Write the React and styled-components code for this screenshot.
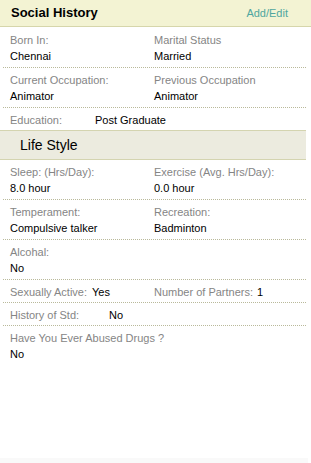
import React from "react";
import styled, { createGlobalStyle } from "styled-components";

const Global = createGlobalStyle`
  html, body { margin: 0; padding: 0; background: #fff; }
  body { font-family: "Liberation Sans", Arial, sans-serif; }
`;

const Page = styled.div`
  width: 311px;
  min-height: 463px;
  display: flex;
  flex-direction: column;
  background: #fff;
`;

const Header = styled.div`
  height: 25px;
  display: flex;
  align-items: center;
  justify-content: space-between;
  padding: 0 23px 1px 11px;
  background: #f3f3d3;
  border-bottom: 1px solid #d6d6ab;
`;

const Title = styled.div`
  font-size: 13px;
  font-weight: bold;
  color: #000;
`;

const EditLink = styled.a`
  font-size: 11px;
  color: #4fa69f;
  text-decoration: none;
  cursor: pointer;
`;

const Content = styled.div`
  width: 306px;
  padding-top: 1px;
`;

const Row = styled.div`
  margin-left: 3px;
  padding: 4px 0 ${(p) => (p.$single ? "2px" : "3px")} 7px;
  display: grid;
  grid-template-columns: ${(p) => (p.$cols === 1 ? "1fr" : "144px 1fr")};
  border-bottom: ${(p) => (p.$noBorder ? "none" : "1px dotted #b9b99a")};
  font-size: 11px;
  line-height: 16px;
`;

const Cell = styled.div`
  display: flex;
  flex-direction: column;
`;

const InlineCell = styled.div`
  display: flex;
  align-items: baseline;
`;

const Label = styled.span`
  color: #858585;
  width: ${(p) => (p.$w ? `${p.$w}px` : "auto")};
  flex-shrink: 0;
  margin-right: ${(p) => (p.$gap ? `${p.$gap}px` : "0")};
`;

const Value = styled.span`
  color: #000;
`;

const SectionBar = styled.div`
  height: 28px;
  display: flex;
  align-items: center;
  padding-left: 20px;
  background: #ecebdf;
  border-top: 1px solid #d4d4b0;
  border-bottom: 1px solid #d4d4b0;
  font-size: 14px;
  color: #000;
`;

const Spacer = styled.div`
  flex: 1;
`;

const BottomStrip = styled.div`
  height: 5px;
  width: 308px;
  background: #f9f9f9;
`;

const Stacked = ({ label, value }) => (
  <Cell>
    <Label>{label}</Label>
    <Value>{value}</Value>
  </Cell>
);

export default function App() {
  return (
    <>
      <Global />
      <Page>
        <Header>
          <Title>Social History</Title>
          <EditLink>Add/Edit</EditLink>
        </Header>
        <Content>
          <Row>
            <Stacked label="Born In:" value="Chennai" />
            <Stacked label="Marital Status" value="Married" />
          </Row>
          <Row>
            <Stacked label="Current Occupation:" value="Animator" />
            <Stacked label="Previous Occupation" value="Animator" />
          </Row>
          <Row $single $noBorder $cols={1}>
            <InlineCell>
              <Label $w={85}>Education:</Label>
              <Value>Post Graduate</Value>
            </InlineCell>
          </Row>
          <SectionBar>Life Style</SectionBar>
          <Row>
            <Stacked label="Sleep: (Hrs/Day):" value="8.0 hour" />
            <Stacked label="Exercise (Avg. Hrs/Day):" value="0.0 hour" />
          </Row>
          <Row>
            <Stacked label="Temperament:" value="Compulsive talker" />
            <Stacked label="Recreation:" value="Badminton" />
          </Row>
          <Row $cols={1}>
            <Stacked label="Alcohal:" value="No" />
          </Row>
          <Row $single>
            <InlineCell>
              <Label $gap={5}>Sexually Active:</Label>
              <Value>Yes</Value>
            </InlineCell>
            <InlineCell>
              <Label $gap={4}>Number of Partners:</Label>
              <Value>1</Value>
            </InlineCell>
          </Row>
          <Row $single $cols={1}>
            <InlineCell>
              <Label $w={99}>History of Std:</Label>
              <Value>No</Value>
            </InlineCell>
          </Row>
          <Row $cols={1} $noBorder>
            <Stacked label="Have You Ever Abused Drugs ?" value="No" />
          </Row>
        </Content>
        <Spacer />
        <BottomStrip />
      </Page>
    </>
  );
}
